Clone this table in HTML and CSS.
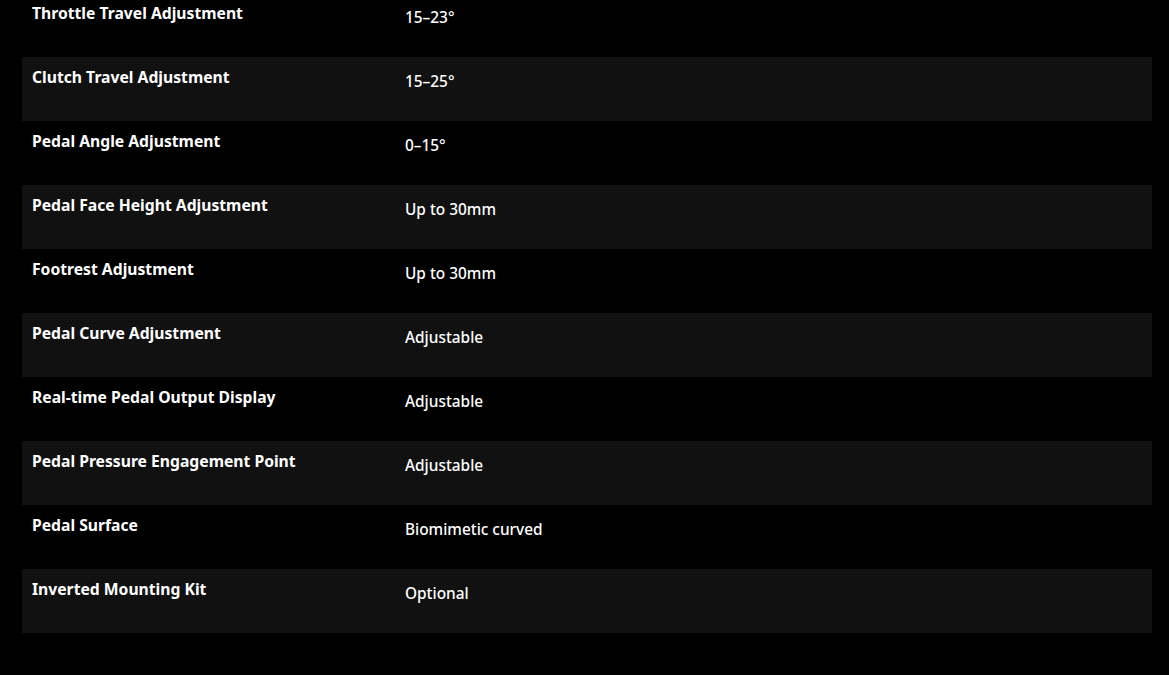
FILE: index.html
```html
<!DOCTYPE html>
<html>
<head>
<meta charset="utf-8">
<link rel="stylesheet" href="styles.css">
</head>
<body>
<div class="specs">
  <div class="row"><div class="label">Throttle Travel Adjustment</div><div class="value">15–23°</div></div>
  <div class="row alt"><div class="label">Clutch Travel Adjustment</div><div class="value">15–25°</div></div>
  <div class="row"><div class="label">Pedal Angle Adjustment</div><div class="value">0–15°</div></div>
  <div class="row alt"><div class="label">Pedal Face Height Adjustment</div><div class="value">Up to 30mm</div></div>
  <div class="row"><div class="label">Footrest Adjustment</div><div class="value">Up to 30mm</div></div>
  <div class="row alt"><div class="label">Pedal Curve Adjustment</div><div class="value">Adjustable</div></div>
  <div class="row"><div class="label">Real-time Pedal Output Display</div><div class="value">Adjustable</div></div>
  <div class="row alt"><div class="label">Pedal Pressure Engagement Point</div><div class="value">Adjustable</div></div>
  <div class="row"><div class="label">Pedal Surface</div><div class="value">Biomimetic curved</div></div>
  <div class="row alt"><div class="label">Inverted Mounting Kit</div><div class="value">Optional</div></div>
</div>
</body>
</html>
```
FILE: styles.css
```css
html, body {
  margin: 0;
  background: #000;
  color: #fff;
}
.specs {
  margin: -7px 17px 0 22px;
}
.row {
  display: grid;
  grid-template-columns: 383px 1fr;
  height: 64px;
}
.row.alt {
  background: #111111;
}
.label {
  font-family: "Noto Sans", sans-serif;
  font-weight: 700;
  font-size: 15.7px;
  line-height: 20px;
  padding: 10px 0 0 10px;
}
.value {
  font-family: "Noto Sans", sans-serif;
  font-weight: 500;
  font-size: 15.4px;
  line-height: 20px;
  padding-top: 15px;
}
```
